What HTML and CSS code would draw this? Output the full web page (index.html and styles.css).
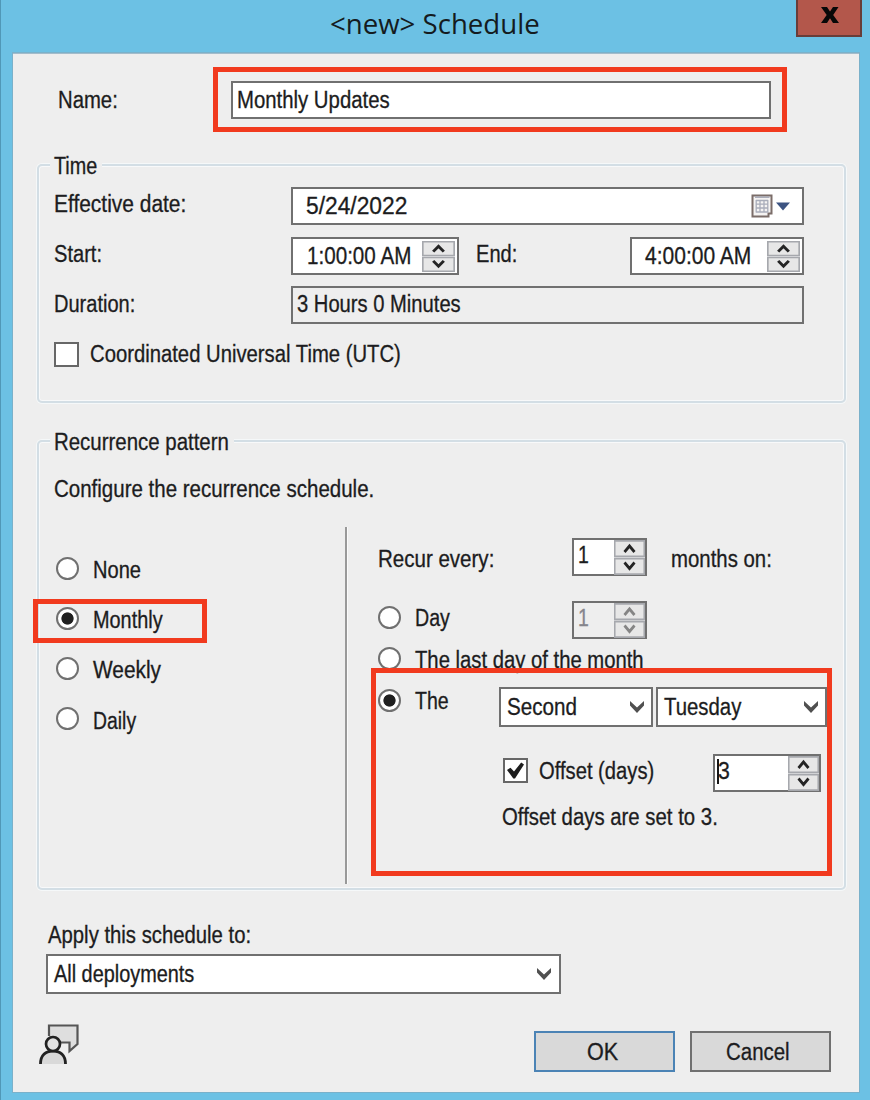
FILE: index.html
```html
<!DOCTYPE html>
<html lang="en">
<head>
<meta charset="utf-8">
<title>Schedule</title>
<link rel="stylesheet" href="styles.css">
</head>
<body>
<svg width="0" height="0" class="defs">
  <symbol id="arrows" viewBox="0 0 31 32" preserveAspectRatio="none">
    <path d="M.75 .75H30.25V15H.75ZM.75 17H30.25V31.2H.75Z" fill="#e7e7e7" stroke="#a6a8ad" stroke-width="1.6"/>
    <path d="M10.5 11L15.500 5.500L20.500 11M10.500 20.500L15.500 26L20.500 20.500" fill="none" stroke="currentColor" stroke-width="2.8"/>
  </symbol>
  <symbol id="chevron" viewBox="0 0 14 12"><path d="M0 0L7 6.500L14 0V4.500L7 12L0 4.500Z" fill="#505050"/></symbol>
</svg>
<div class="window">
  <header class="titlebar">
    <span class="title" data-w="210">&lt;new&gt; Schedule</span>
    <div class="close"><svg width="18" height="16" viewBox="0 0 18 16"><path d="M0 0H6L9 4.5L12 0H17.5L12.2 8L18 16H12L9 11.2L6 16H0L5.7 8Z" fill="#080808"/></svg></div>
  </header>
  <main class="client">
    <div class="name-row">
      <span class="name-label" data-w="60">Name:</span>
      <div class="mark name-mark"><div class="field name-field"><span data-w="153">Monthly Updates</span></div></div>
    </div>

    <section class="group time">
      <div class="legend"><span data-w="43">Time</span></div>
      <div class="row">
        <span class="label" data-w="132">Effective date:</span>
        <div class="field date"><span data-w="101">5/24/2022</span>
          <svg class="calendar" width="40" height="24" viewBox="0 0 40 24">
            <path d="M1.5 1.5H20.5V19.5H17.5V22.5H1.5Z" fill="#f5f3f2" stroke="#7b6d69" stroke-width="2"/>
            <path d="M4 3.2H18.5" stroke="#a7a9b7" stroke-width="1.5"/>
            <path d="M5 6.5H17M5 10.2H17M5 14H17M5 18H17M5.2 6V18.5M9 6V18.5M13 6V18.5M16.8 6V18.5" stroke="#a9adba" stroke-width="1.3"/>
            <path d="M25 8.500H39L32 16.500Z" fill="#3d5482"/>
          </svg>
        </div>
      </div>
      <div class="row start-row">
        <span class="label" data-w="48">Start:</span>
        <div class="field clock start"><span data-w="104">1:00:00 AM</span><svg class="arrows" width="33" height="31"><use href="#arrows"/></svg></div>
        <span class="label end-label" data-w="41">End:</span>
        <div class="field clock end"><span data-w="106">4:00:00 AM</span><svg class="arrows" width="33" height="31"><use href="#arrows"/></svg></div>
      </div>
      <div class="row duration-row">
        <span class="label" data-w="81">Duration:</span>
        <div class="field readonly"><span data-w="164">3 Hours 0 Minutes</span></div>
      </div>
      <div class="utc"><i class="check"></i><span data-w="311">Coordinated Universal Time (UTC)</span></div>
    </section>

    <section class="group recurrence">
      <div class="legend"><span data-w="175">Recurrence pattern</span></div>
      <span class="intro" data-w="320">Configure the recurrence schedule.</span>
      <div class="columns">
        <div class="frequency">
          <div class="option"><i class="radio"></i><span data-w="48">None</span></div>
          <div class="option"><i class="radio on"></i><span data-w="70">Monthly</span></div>
          <div class="option"><i class="radio"></i><span data-w="68">Weekly</span></div>
          <div class="option"><i class="radio"></i><span data-w="43">Daily</span></div>
        </div>
        <div class="pattern">
          <div class="every">
            <span class="every-label" data-w="116">Recur every:</span>
            <div class="field spin"><span data-w="11">1</span><svg class="arrows" width="31" height="35"><use href="#arrows"/></svg></div>
            <span class="months" data-w="101">months on:</span>
          </div>
          <div class="day">
            <div class="choice"><i class="radio"></i><span data-w="35">Day</span></div>
            <div class="field spin disabled"><span data-w="11">1</span><svg class="arrows" width="31" height="35"><use href="#arrows"/></svg></div>
          </div>
          <div class="choice last"><i class="radio"></i><span data-w="229">The last day of the month</span></div>
          <div class="the">
            <div class="choice"><i class="radio on"></i><span data-w="34">The</span></div>
            <div class="field select which"><span data-w="70">Second</span><svg width="14" height="12"><use href="#chevron"/></svg></div>
            <div class="field select weekday"><span data-w="77">Tuesday</span><svg width="14" height="12"><use href="#chevron"/></svg></div>
          </div>
          <div class="offset">
            <i class="check"><svg width="19" height="18" viewBox="0 0 19 18"><path d="M1 8L4.5 5.800L8 9.500L15.200 .5L18 2.500L9 16.500H7.300Z" fill="#1d1d1d"/></svg></i>
            <span class="offset-label" data-w="115">Offset (days)</span>
            <div class="field spin wide"><b class="caret"></b><span data-w="12">3</span><svg class="arrows" width="31" height="35"><use href="#arrows"/></svg></div>
          </div>
          <span class="note" data-w="216">Offset days are set to 3.</span>
        </div>
      </div>
      <div class="mark monthly-mark"></div>
      <div class="mark pattern-mark"></div>
    </section>

    <span class="apply-label" data-w="203">Apply this schedule to:</span>
    <div class="field select apply"><span data-w="140">All deployments</span><svg width="14" height="12"><use href="#chevron"/></svg></div>
    <footer class="footer">
      <svg class="feedback" width="40" height="41" viewBox="0 0 40 41">
        <path d="M10 12V1.500H38.500V20L30.500 27V18.500H21" fill="#dedede" stroke="#555" stroke-width="2.2"/>
        <path d="M1.5 40C1.5 31 7 27 14 27S26.500 31 26.500 40" fill="#d9d9d9" stroke="#222" stroke-width="2.8"/>
        <circle cx="14" cy="20" r="7" fill="#e2e2e2" stroke="#222" stroke-width="2.7"/>
      </svg>
      <div class="button primary"><span data-w="31">OK</span></div>
      <div class="button"><span data-w="64">Cancel</span></div>
    </footer>
  </main>
</div>
<script src="fit.js"></script>
</body>
</html>
```

FILE: fit.js
```js
// Condenses each caption horizontally to its design width.
document.querySelectorAll('[data-w]').forEach(function (el) {
  var target = Number(el.dataset.w);
  el.style.transform = 'scaleX(' + target / el.offsetWidth + ')';
  el.style.marginRight = target - el.offsetWidth + 'px';
});
```

FILE: styles.css
```css
* { box-sizing: border-box; }
body { margin: 0; font: 23px/26px "Liberation Sans", Arial, sans-serif; color: #1c1c20; }
.defs { position: absolute; }
svg { display: block; flex: none; }
span { display: block; flex: none; width: max-content; white-space: nowrap; transform-origin: 0 50%; -webkit-text-stroke: .3px currentColor; }

.window { width: 870px; height: 1100px; background: #6cc1e4; border-left: 1px solid #5098b7; padding: 0 11px 8px 12px; }
.titlebar { height: 53px; display: flex; justify-content: space-between; margin-right: -3px; }
.title { font: 28px/38px "Open Sans", "Noto Sans", sans-serif; margin-left: 317px; margin-top: 4px; color: #141b20; -webkit-text-stroke: 0; }
.close { width: 66px; height: 37px; background: #b3574b; border: 2px solid #683d39; border-top: 0; padding: 7px 0 0 23px; }
.client { height: 1039px; background: #eee; border-top: 1px solid #a3bccb; padding: 13px 12px 0 24px; outline: 1px solid #7ab1ca; outline-offset: 0; }

.mark { border: 5px solid #f13a1e; }
.field { height: 38px; border: 2px solid #707070; background: #fff; display: flex; align-items: center; flex: none; }
.name-row { display: flex; align-items: center; height: 65px; padding-left: 21px; }
.name-label + .name-mark { margin-left: auto; }
.name-mark { width: 574px; height: 65px; margin-right: 60px; padding: 9px 0 0 13px; }
.name-field { width: 540px; padding-left: 4px; }

.group { position: relative; border: 2px solid #d3dee5; border-radius: 5px; box-shadow: 0 0 0 1px #f5f8f9, inset 0 0 0 1px #f8f9fa; width: 809px; }
.legend { position: absolute; top: -13px; left: 11px; padding: 0 5px 0 4px; background: #eee; }
.time { margin-top: 32px; height: 239px; padding: 21px 0 0 15px; }
.row { display: flex; height: 38px; }
.label { margin-top: 4px; }
.row > .label:first-child + .field { margin-left: auto; }
.date { width: 513px; margin-right: 40px; padding: 0 11px 0 13px; justify-content: space-between; }
.start-row { margin-top: 12px; display: grid; grid-template-columns: 237px 185px 154px 174px; }
.start-row > .label:first-child + .field { margin-left: 0; }
.start { width: 168px; padding-left: 14px; }
.end-label { margin-left: 0; }
.end { width: 174px; padding-left: 13px; }
.clock { justify-content: space-between; padding-right: 2px; }
.arrows { color: #242424; }
.duration-row { margin-top: 11px; }
.duration-row .label { margin-top: 5px; }
.readonly { width: 513px; margin-right: 40px; background: #eee; padding-left: 4px; }
.readonly span { margin-top: -2px; }
.utc { display: flex; align-items: center; gap: 11px; margin-top: 16px; height: 28px; }
.check { display: block; flex: none; width: 25px; height: 25px; background: #fff; border: 2px solid #676767; padding: 2px 1px; }

.recurrence { margin-top: 36px; height: 450px; padding: 34px 0 0 15px; }
.time + .recurrence { margin-top: 37px; }
.columns { display: flex; margin-top: 25px; }
.frequency { width: 293px; height: 357px; border-right: 2px solid #999; padding-top: 28px; box-shadow: 1px 0 #fafafa; }
.option { display: flex; align-items: center; height: 26px; gap: 14px; margin-bottom: 24.200px; padding-left: 2px; }
.option span { position: relative; top: 2px; }
.radio { display: block; flex: none; width: 23px; height: 23px; border: 2px solid #707070; border-radius: 50%; background: #fff; }
.radio.on { background: radial-gradient(circle, #202020 0 5.700px, #fff 6.500px); }
.pattern { width: 450px; padding-left: 31px; padding-top: 11px; }
.every { display: flex; height: 38px; }
.every-label { margin-top: 8px; }
.every .spin { margin-left: 78px; }
.months { margin-top: 8px; margin-left: 24px; }
.spin { width: 75px; justify-content: space-between; padding-left: 4px; }
.spin > span { margin-top: -5px; }
.disabled { background: #eee; color: #85858c; }
.disabled .arrows { color: #858585; }
.day { display: flex; justify-content: space-between; width: 269px; margin-top: 25px; height: 38px; }
.choice { display: flex; align-items: center; gap: 14px; height: 26px; flex: none; }
.day .choice { margin-top: 3px; }
.choice span { position: relative; top: 1px; }
.last { margin-top: 6px; }
.last span { top: 2px; }
.the { display: flex; margin-top: 16px; height: 39px; }
.the .choice { width: 121px; }
.select { height: 40px; padding: 0 7px 0 6px; justify-content: space-between; }
.which { width: 154px; }
.weekday { width: 171px; margin-left: 3px; }
.offset { display: flex; margin-top: 28px; padding-left: 125px; height: 38px; }
.offset .check { margin-top: 4px; }
.offset-label { margin-top: 4px; margin-left: 11px; }
.wide { width: 108px; margin-left: 59px; padding-left: 2px; }
.caret { width: 2px; height: 25px; background: #171717; margin-top: -4px; }
.wide > span { margin-left: -1px; }
.wide .arrows { margin-left: auto; }
.note { margin: 12px 0 0 124px; }
.monthly-mark { position: absolute; left: -6px; top: 157px; width: 174px; height: 44px; }
.pattern-mark { position: absolute; left: 332px; top: 226px; width: 461px; height: 208px; }

.apply-label { margin: 32px 0 0 11px; }
.apply { width: 515px; margin: 6px 0 0 9px; padding-right: 8px; }
.footer { display: flex; margin-top: 30px; padding-left: 2px; }
.button { width: 141px; height: 41px; margin-top: 7px; background: #d9d9d9; border: 2px solid #707070; display: flex; align-items: center; justify-content: center; margin-left: 15px; }
.primary { border-color: #4b83b5; margin-left: 455px; }
.primary span { position: relative; left: -2px; }
.primary + .button span { position: relative; left: -3px; }
```
